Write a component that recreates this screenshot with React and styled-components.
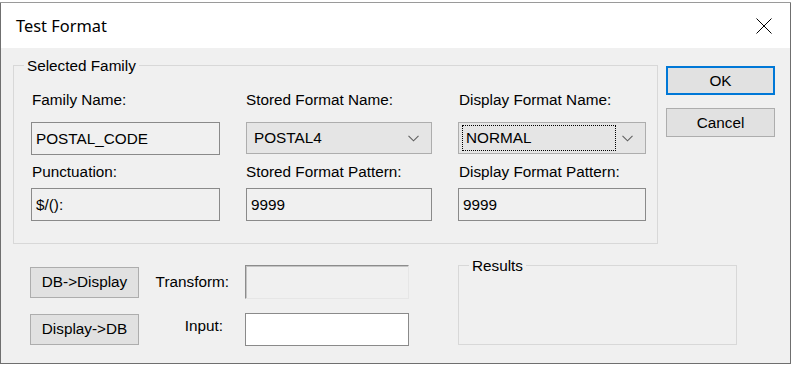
import React from "react"
import styled, { createGlobalStyle } from "styled-components"

const GlobalStyle = createGlobalStyle`
  html, body {
    margin: 0;
    padding: 0;
    background: #ffffff;
  }
  body {
    width: 791px;
    height: 365px;
    overflow: hidden;
    font-family: "Liberation Sans", Arial, sans-serif;
  }
`

const Backdrop = styled.div`
  height: 2px;
  background: #ffffff;
  border-bottom: 1px solid #9a9a9a;
`

const Window = styled.div`
  width: 789px;
  height: 360px;
  border: 1px solid #6f6f6f;
  border-top: none;
  display: flex;
  flex-direction: column;
  background: #f0f0f0;
`

const TitleBar = styled.div`
  height: 45px;
  flex: none;
  background: #ffffff;
  display: flex;
  align-items: center;
  justify-content: space-between;
  padding: 0 18px 0 15px;
`

const Title = styled.div`
  font-family: "Noto Sans", "Open Sans", sans-serif;
  font-size: 16.4px;
  color: #000000;
  margin-top: -1px;
`

const Body = styled.div`
  flex: 1;
  display: flex;
  gap: 9px;
  padding: 17px 0 0 12px;
  font-size: 15.3px;
  color: #000000;
`

const LeftCol = styled.div`
  width: 644px;
  display: flex;
  flex-direction: column;
`

const GroupBox = styled.div`
  position: relative;
  flex: none;
  border: 1px solid #d8d8d8;
  box-sizing: border-box;
  width: ${(p) => p.$w}px;
  height: ${(p) => p.$h}px;
  padding: ${(p) => p.$pad};
  display: flex;
  gap: 26px;
`

const GroupLabel = styled.span`
  position: absolute;
  top: -9px;
  left: 10px;
  padding: 0 3px;
  background: #f0f0f0;
  line-height: 17px;
`

const Column = styled.div`
  display: flex;
  flex-direction: column;
  width: ${(p) => p.$w}px;
`

const FieldLabel = styled.div`
  line-height: 17px;
  margin: ${(p) => p.$m};
  white-space: nowrap;
`

const TextBox = styled.div`
  height: 33px;
  box-sizing: border-box;
  border: 1px solid #8a8a8a;
  background: ${(p) => (p.$white ? "#ffffff" : "#f0f0f0")};
  display: flex;
  align-items: center;
  padding: 0 4px;
  white-space: nowrap;
`

const Combo = styled.div`
  height: 32px;
  box-sizing: border-box;
  border: 1px solid #adadad;
  background: #e5e5e5;
  display: flex;
  align-items: center;
  padding: 0 12px 0 3px;
  gap: 6px;
`

const ComboText = styled.div`
  flex: 1;
  height: 26px;
  box-sizing: border-box;
  display: flex;
  align-items: center;
  padding-left: 3px;
  border: 1px dotted ${(p) => (p.$focus ? "#000000" : "transparent")};
`

const BottomArea = styled.div`
  display: flex;
  margin-top: 21px;
  padding-left: 17px;
  gap: 49px;
`

const ActionGrid = styled.div`
  flex: none;
  display: grid;
  grid-template-columns: 109px 106px 164px;
  grid-auto-rows: 34px;
  row-gap: 13px;
  align-items: center;
`

const ActionLabel = styled.div`
  text-align: right;
  padding-right: ${(p) => p.$pr}px;
  margin-top: ${(p) => p.$mt || 0}px;
`

const SunkenBox = styled.div`
  height: 34px;
  box-sizing: border-box;
  border: 1px solid;
  border-color: #8c8c8c #e6e6e6 #e6e6e6 #8c8c8c;
  box-shadow: inset 1px 1px 0 #c4c4c4;
  background: #f0f0f0;
`

const Button = styled.button`
  box-sizing: border-box;
  width: 109px;
  height: ${(p) => p.$h || 31}px;
  margin: 0;
  padding: 0;
  font-family: "Liberation Sans", Arial, sans-serif;
  font-size: 15.3px;
  color: #000000;
  background: #e1e1e1;
  border: ${(p) => (p.$default ? "2px solid #0078d7" : "1px solid #adadad")};
  cursor: pointer;
`

const RightCol = styled.div`
  display: flex;
  flex-direction: column;
  gap: 13px;
  padding-top: 1px;
`

const Chevron = () => (
  <svg width="11" height="7" viewBox="0 0 11 7" fill="none">
    <path d="M0.5 0.8 L5.5 5.8 L10.5 0.8" stroke="#606060" strokeWidth="1.1" />
  </svg>
)

const CloseIcon = () => (
  <svg width="16" height="16" viewBox="0 0 16 16">
    <path d="M0.5 0.5 L15.5 15.5 M15.5 0.5 L0.5 15.5" stroke="#000000" strokeWidth="1" />
  </svg>
)

const App = () => {
  return (
    <>
      <GlobalStyle />
      <Backdrop />
      <Window>
        <TitleBar>
          <Title>Test Format</Title>
          <CloseIcon />
        </TitleBar>
        <Body>
          <LeftCol>
            <GroupBox $w={645} $h={179} $pad="25px 0 0 17px">
              <GroupLabel>Selected Family</GroupLabel>
              <Column $w={189}>
                <FieldLabel $m="0 0 14px 1px">Family Name:</FieldLabel>
                <TextBox>POSTAL_CODE</TextBox>
                <FieldLabel $m="8px 0 8px 1px">Punctuation:</FieldLabel>
                <TextBox>$/():</TextBox>
              </Column>
              <Column $w={186}>
                <FieldLabel $m="0 0 14px 0">Stored Format Name:</FieldLabel>
                <Combo>
                  <ComboText>POSTAL4</ComboText>
                  <Chevron />
                </Combo>
                <FieldLabel $m="9px 0 8px 0">Stored Format Pattern:</FieldLabel>
                <TextBox>9999</TextBox>
              </Column>
              <Column $w={188}>
                <FieldLabel $m="0 0 14px 1px">Display Format Name:</FieldLabel>
                <Combo>
                  <ComboText $focus>NORMAL</ComboText>
                  <Chevron />
                </Combo>
                <FieldLabel $m="9px 0 8px 1px">Display Format Pattern:</FieldLabel>
                <TextBox>9999</TextBox>
              </Column>
            </GroupBox>
            <BottomArea>
              <ActionGrid>
                <Button>DB-&gt;Display</Button>
                <ActionLabel $pr={16}>Transform:</ActionLabel>
                <SunkenBox />
                <Button>Display-&gt;DB</Button>
                <ActionLabel $pr={22} $mt={-6}>Input:</ActionLabel>
                <TextBox $white />
              </ActionGrid>
              <GroupBox $w={279} $h={80} $pad="0">
                <GroupLabel>Results</GroupLabel>
              </GroupBox>
            </BottomArea>
          </LeftCol>
          <RightCol>
            <Button $default $h={29}>OK</Button>
            <Button $h={29}>Cancel</Button>
          </RightCol>
        </Body>
      </Window>
    </>
  )
}

export default App
